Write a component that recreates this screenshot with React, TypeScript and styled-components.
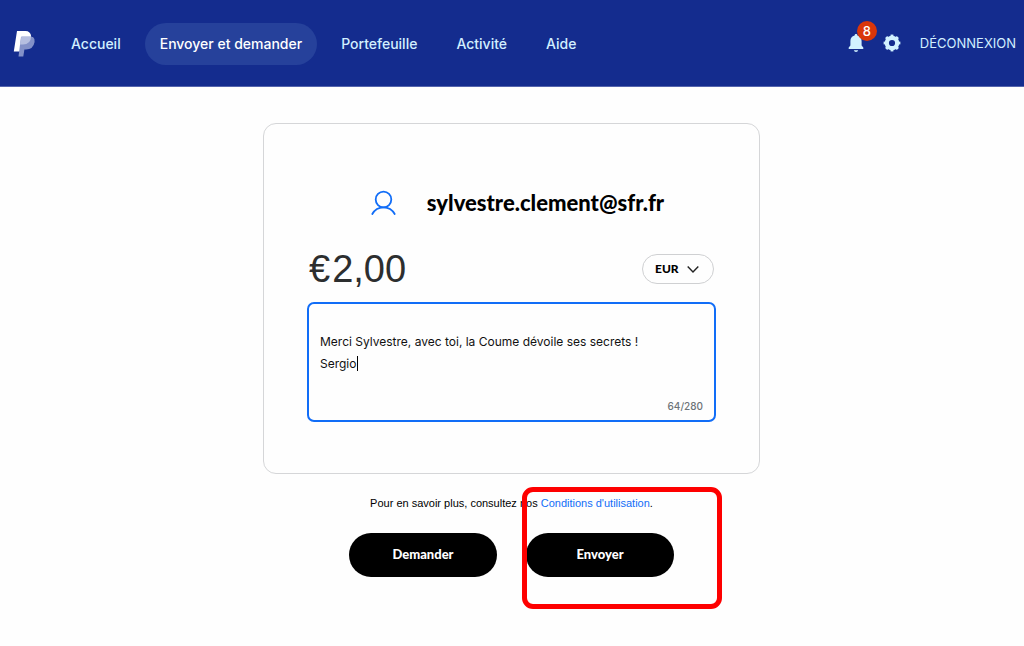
import React, { useState } from "react";
import styled, { createGlobalStyle } from "styled-components";

const sans = `Inter, "Liberation Sans", sans-serif`;
const grotesque = `"Liberation Sans", Arial, sans-serif`;
const display = `Lato, "Open Sans", sans-serif`;

const GlobalStyle = createGlobalStyle`
  *, *::before, *::after { box-sizing: border-box; }
  body { margin: 0; background: #fefefe; color: #000; font-family: ${sans}; }
`;

const Header = styled.header`
  display: flex;
  align-items: center;
  height: 87px;
  padding: 2px 8px 0 12px;
  background: #142c8e;
  border-bottom: 1px solid #5565ad;
`;

const LogoLink = styled.a`
  display: flex;
  margin-right: 20px;
`;

const Nav = styled.nav`
  display: flex;
  align-items: center;
  gap: 9px;
  flex: 1;
`;

const NavLink = styled.a<{ $active?: boolean }>`
  padding: 0 15px;
  border-radius: 21px;
  font-size: 14px;
  font-weight: 500;
  line-height: 42px;
  white-space: nowrap;
  text-decoration: none;
  color: ${(p) => (p.$active ? "#fff" : "#d2efff")};
  background: ${(p) => (p.$active ? "#26419b" : "transparent")};
`;

const Tools = styled.div`
  display: flex;
  align-items: center;
  gap: 19px;
  padding-bottom: 2px;
`;

const IconButton = styled.button`
  position: relative;
  display: flex;
  padding: 0;
  border: 0;
  background: none;
  color: #d2f2ff;
  cursor: pointer;
`;

const Badge = styled.span`
  position: absolute;
  top: -12px;
  left: 9px;
  width: 20px;
  height: 20px;
  border-radius: 50%;
  background: #d9360b;
  color: #fff;
  font: 500 13px/20px ${sans};
  text-align: center;
`;

const Logout = styled.a`
  font-size: 13px;
  color: #d2efff;
  text-decoration: none;
`;

const Main = styled.main`
  display: flex;
  flex-direction: column;
  align-items: center;
  padding: 36px 17px 36px 16px;
`;

const Card = styled.section`
  width: 100%;
  max-width: 497px;
  padding: 63px 43px 51px;
  border: 1px solid #d5d6d8;
  border-radius: 13px;
`;

const Recipient = styled.div`
  display: flex;
  align-items: center;
  justify-content: center;
  gap: 30px;
  padding-left: 12px;
`;

const Email = styled.h1`
  margin: 0;
  font: 900 22px/32px ${display};
`;

const AmountRow = styled.div`
  display: flex;
  align-items: center;
  justify-content: space-between;
  margin: 26px 2px 9px;
`;

const Amount = styled.label`
  display: flex;
  align-items: center;
  gap: 2px;
  font: 38px/48px ${grotesque};
  color: #2c2e2f;
`;

const AmountInput = styled.input`
  width: 120px;
  padding: 0;
  border: 0;
  outline: 0;
  background: none;
  font: inherit;
  color: inherit;
`;

const Currency = styled.div`
  position: relative;
  display: flex;
`;

const CurrencySelect = styled.select`
  appearance: none;
  width: 72px;
  height: 30px;
  padding: 0 12px 2px;
  border: 1px solid #cfd0d2;
  border-radius: 15px;
  background: none;
  color: #000;
  font: 900 12px ${display};
`;

const Chevron = styled.svg`
  position: absolute;
  top: 11px;
  right: 15px;
  pointer-events: none;
`;

const NoteBox = styled.div`
  position: relative;
  display: flex;
  flex-direction: column;
  height: 120px;
  padding: 27px 11px 7px;
  border: 2px solid #116df7;
  border-radius: 7px;
`;

const Note = styled.textarea`
  flex: 1;
  padding: 0;
  border: 0;
  outline: 0;
  resize: none;
  overflow: hidden;
  background: none;
  color: #111;
  font: 12px/22px ${sans};
`;

const Caret = styled.span`
  position: absolute;
  top: 52px;
  left: 48px;
  width: 1px;
  height: 15px;
  background: #000;
`;

const Counter = styled.span`
  align-self: flex-end;
  font: 500 10px/14px ${sans};
  color: #6c7378;
`;

const Terms = styled.p`
  margin: 21px 0 22px;
  font: 11px/16px ${grotesque};
`;

const TermsLink = styled.a`
  color: #116df7;
  text-decoration: none;
`;

const Actions = styled.div`
  display: flex;
  gap: 29px;
`;

const PillButton = styled.button`
  width: 148px;
  height: 44px;
  padding: 0 0 2px;
  border: 0;
  border-radius: 22px;
  background: #000;
  color: #fff;
  font: 900 13px ${display};
  cursor: pointer;
`;

const Highlighted = styled.div`
  position: relative;
  display: flex;

  &::after {
    content: "";
    position: absolute;
    top: -46px;
    right: -48px;
    bottom: -32px;
    left: -4px;
    border: 5px solid #fe0000;
    border-radius: 11px;
    pointer-events: none;
  }
`;

const links = ["Accueil", "Envoyer et demander", "Portefeuille", "Activité", "Aide"];

export default function App() {
  const [amount, setAmount] = useState("2,00");
  const [note, setNote] = useState(
    "Merci Sylvestre, avec toi, la Coume dévoile ses secrets !\nSergio"
  );

  return (
    <>
      <GlobalStyle />
      <Header>
        <LogoLink href="#" aria-label="PayPal">
          <svg width="24" height="28" viewBox="0 0 24 28">
            <path d="M5 1h8.500Q18.500 1 19.200 6.500 19 14.500 11 15H9.500L8.300 21.500H1.800Z" fill="#fff" />
            <path d="M9 7h12q2 1.500 1.600 5-1.400 7.500-8.600 7.500h-1.600L11.300 26.500H6.500Z" fill="#8391c8" />
            <path d="M9.400 6.200h9.800Q18.600 14.500 11 14.500H8Z" fill="#b6bfe0" />
          </svg>
        </LogoLink>
        <Nav>
          {links.map((label) => (
            <NavLink key={label} href="#" $active={label === "Envoyer et demander"}>
              {label}
            </NavLink>
          ))}
        </Nav>
        <Tools>
          <IconButton aria-label="Notifications">
            <svg width="16" height="20" viewBox="0 0 16 20" fill="currentColor">
              <path d="M8 1C8.900 1 9.400 1.600 9.400 2.500 12.200 3.200 13.600 5.300 13.600 8v4.500L15.300 14.500V16H.7V14.500L2.400 12.500V8C2.400 5.300 3.800 3.200 6.600 2.500 6.600 1.600 7.100 1 8 1Z" />
              <path d="M5.800 17.200h4.400Q9.800 19 8 19T5.800 17.200Z" />
            </svg>
            <Badge>8</Badge>
          </IconButton>
          <IconButton aria-label="Paramètres">
            <svg width="18" height="18" viewBox="0 0 18 18">
              <circle cx="9" cy="9" r="5.200" fill="none" stroke="currentColor" strokeWidth="4.200" />
              <circle
                cx="9"
                cy="9"
                r="7.300"
                fill="none"
                stroke="currentColor"
                strokeWidth="2.200"
                pathLength="80"
                strokeDasharray="5 5"
                strokeDashoffset="2.5"
              />
            </svg>
          </IconButton>
          <Logout href="#">DÉCONNEXION</Logout>
        </Tools>
      </Header>
      <Main>
        <Card>
          <Recipient>
            <svg width="26" height="26" viewBox="0 0 26 26" fill="none" stroke="#116df7" strokeWidth="1.800">
              <circle cx="12.500" cy="9.500" r="7.800" />
              <path d="M1.300 24C3.500 20 7.500 17.300 12.500 17.300S21.500 20 23.700 24" strokeLinecap="round" />
            </svg>
            <Email>sylvestre.clement@sfr.fr</Email>
          </Recipient>
          <AmountRow>
            <Amount>
              €
              <AmountInput
                aria-label="Montant"
                value={amount}
                onChange={(e) => setAmount(e.target.value)}
              />
            </Amount>
            <Currency>
              <CurrencySelect aria-label="Devise" defaultValue="EUR">
                <option>EUR</option>
                <option>USD</option>
              </CurrencySelect>
              <Chevron width="12" height="9" viewBox="0 0 12 9" fill="none" stroke="#222" strokeWidth="1.400">
                <path d="M.7 1.500 6 7 11.300 1.500" />
              </Chevron>
            </Currency>
          </AmountRow>
          <NoteBox>
            <Note
              aria-label="Note"
              maxLength={280}
              value={note}
              onChange={(e) => setNote(e.target.value)}
            />
            <Caret />
            <Counter>{note.length}/280</Counter>
          </NoteBox>
        </Card>
        <Terms>
          Pour en savoir plus, consultez nos <TermsLink href="#">Conditions d'utilisation</TermsLink>.
        </Terms>
        <Actions>
          <PillButton>Demander</PillButton>
          <Highlighted>
            <PillButton>Envoyer</PillButton>
          </Highlighted>
        </Actions>
      </Main>
    </>
  );
}
